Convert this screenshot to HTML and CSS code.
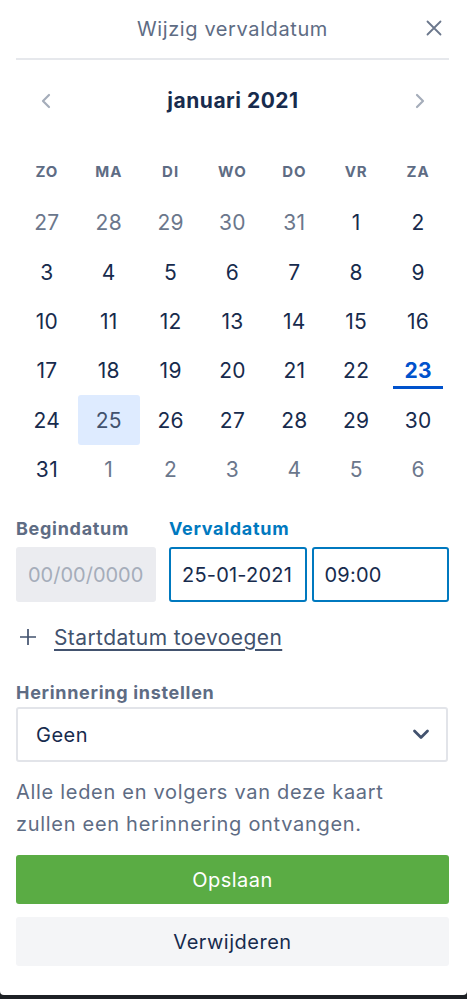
FILE: index.html
```html
<!DOCTYPE html>
<html lang="nl">
<head>
<meta charset="utf-8">
<link rel="stylesheet" href="styles.css">
</head>
<body>
<div class="popup">
  <header class="head">
    <span class="head-title">Wijzig vervaldatum</span>
    <span class="close">
      <svg width="16" height="16" viewBox="0 0 16 16"><path d="M1.5 1.5 L14.5 14.5 M14.5 1.5 L1.5 14.5" stroke="#6b778c" stroke-width="1.8" stroke-linecap="round" fill="none"/></svg>
    </span>
  </header>
  <div class="month">
    <span class="nav"><svg width="12" height="16" viewBox="0 0 12 16"><path d="M9 2 L3 8 L9 14" stroke="#a5adba" stroke-width="2.2" fill="none" stroke-linecap="round" stroke-linejoin="round"/></svg></span>
    <span class="month-title">januari 2021</span>
    <span class="nav"><svg width="12" height="16" viewBox="0 0 12 16"><path d="M3 2 L9 8 L3 14" stroke="#a5adba" stroke-width="2.2" fill="none" stroke-linecap="round" stroke-linejoin="round"/></svg></span>
  </div>
  <div class="grid">
    <div class="wd">ZO</div><div class="wd">MA</div><div class="wd">DI</div><div class="wd">WO</div><div class="wd">DO</div><div class="wd">VR</div><div class="wd">ZA</div>
    <div class="d out">27</div><div class="d out">28</div><div class="d out">29</div><div class="d out">30</div><div class="d out">31</div><div class="d">1</div><div class="d">2</div>
    <div class="d">3</div><div class="d">4</div><div class="d">5</div><div class="d">6</div><div class="d">7</div><div class="d">8</div><div class="d">9</div>
    <div class="d">10</div><div class="d">11</div><div class="d">12</div><div class="d">13</div><div class="d">14</div><div class="d">15</div><div class="d">16</div>
    <div class="d">17</div><div class="d">18</div><div class="d">19</div><div class="d">20</div><div class="d">21</div><div class="d">22</div><div class="d today">23</div>
    <div class="d">24</div><div class="d sel">25</div><div class="d">26</div><div class="d">27</div><div class="d">28</div><div class="d">29</div><div class="d">30</div>
    <div class="d">31</div><div class="d out">1</div><div class="d out">2</div><div class="d out">3</div><div class="d out">4</div><div class="d out">5</div><div class="d out">6</div>
  </div>
  <div class="dates">
    <div class="field start">
      <div class="label">Begindatum</div>
      <div class="input disabled">00/00/0000</div>
    </div>
    <div class="field due">
      <div class="label blue">Vervaldatum</div>
      <div class="pair">
        <div class="input active">25-01-2021</div>
        <div class="input active">09:00</div>
      </div>
    </div>
  </div>
  <div class="add">
    <svg width="18" height="18" viewBox="0 0 18 18"><path d="M9 1 V17 M1 9 H17" stroke="#42526e" stroke-width="1.7" fill="none"/></svg>
    <span class="add-text">Startdatum toevoegen</span>
  </div>
  <div class="label reminder-label">Herinnering instellen</div>
  <div class="select">
    <span>Geen</span>
    <svg width="18" height="11" viewBox="0 0 18 11"><path d="M2.5 2 L9 8.5 L15.5 2" stroke="#42526e" stroke-width="2.8" fill="none" stroke-linecap="round" stroke-linejoin="round"/></svg>
  </div>
  <p class="note">Alle leden en volgers van deze kaart<br>zullen een herinnering ontvangen.</p>
  <button class="btn save">Opslaan</button>
  <button class="btn remove">Verwijderen</button>
</div>
</body>
</html>
```

FILE: styles.css
```css
* { box-sizing: border-box; }
html, body { margin: 0; padding: 0; }
body {
  background: #1d2125;
  font-family: Inter, "Noto Sans", sans-serif;
  color: #172b4d;
  width: 467px;
  height: 999px;
  overflow: hidden;
}
.popup {
  background: #fff;
  height: 995px;
  border-radius: 0 0 4px 4px;
  padding: 0 18px 0 16px;
  display: flex;
  flex-direction: column;
}
.head {
  height: 60px;
  border-bottom: 2px solid #e6e8ec;
  display: flex;
  align-items: center;
  justify-content: center;
  position: relative;
}
.head-title {
  font-size: 20px;
  letter-spacing: 0.6px;
  color: #5e6c84;
}
.close {
  position: absolute;
  right: 7px;
  top: 20px;
  display: flex;
}
.month {
  height: 81px;
  display: flex;
  align-items: center;
  justify-content: space-between;
  padding: 0 23px 0 24px;
}
.month-title {
  font-size: 21px;
  letter-spacing: 0.5px;
  font-weight: 700;
  color: #172b4d;
}
.nav { display: flex; }
.grid {
  display: grid;
  grid-template-columns: repeat(7, 1fr);
  grid-auto-rows: 49.3px;
  margin-top: 8px;
}
.wd {
  font-size: 15px;
  font-weight: 700;
  color: #5e6c84;
  display: flex;
  align-items: center;
  justify-content: center;
  letter-spacing: 1px;
  padding-bottom: 4px;
}
.d {
  font-size: 21px;
  letter-spacing: 0.3px;
  display: flex;
  align-items: center;
  justify-content: center;
  color: #172b4d;
  border-radius: 3px;
  position: relative;
}
.d.out { color: #6b778c; }
.d.sel { background: #deebff; color: #42526e; }
.d.today { color: #0052cc; font-weight: 700; }
.d.today::after {
  content: "";
  position: absolute;
  left: 6px;
  right: 6px;
  bottom: 6px;
  height: 3px;
  background: #0052cc;
}
.dates {
  display: flex;
  gap: 13px;
  margin-top: 24px;
}
.label {
  font-size: 18px;
  letter-spacing: 0.7px;
  font-weight: 700;
  color: #5e6c84;
  line-height: 22px;
}
.label.blue { color: #0079bf; }
.field .label { margin-bottom: 7px; }
.start { width: 140px; flex: none; }
.due { flex: 1; min-width: 0; }
.pair { display: flex; gap: 5px; }
.input {
  height: 55px;
  border-radius: 3px;
  font-size: 20px;
  display: flex;
  align-items: center;
  padding: 0 12px;
  white-space: nowrap;
  overflow: hidden;
}
.input.disabled {
  background: #ebecf0;
  color: #a5adba;
}
.input.active {
  border: 2px solid #0079bf;
  color: #172b4d;
  letter-spacing: 0.2px;
  padding: 0 0 0 11px;
  flex: 1 1 0;
  min-width: 0;
}
.add {
  display: flex;
  align-items: center;
  gap: 17px;
  margin-top: 22px;
  padding-left: 3px;
  height: 26px;
}
.add-text {
  font-size: 21px;
  letter-spacing: 0.4px;
  color: #42526e;
  text-decoration: underline;
  text-decoration-thickness: 1.5px;
  text-underline-offset: 4px;
}
.reminder-label { margin-top: 32px; margin-bottom: 3px; }
.select {
  height: 55px;
  border: 2px solid #e2e4e9;
  border-radius: 3px;
  display: flex;
  align-items: center;
  justify-content: space-between;
  padding: 0 16px 0 18px;
  font-size: 20px;
  letter-spacing: 0.5px;
  color: #172b4d;
  margin-right: 1px;
}
.note {
  margin: 14px 0 0;
  font-size: 20px;
  letter-spacing: 0.7px;
  line-height: 32px;
  color: #5e6c84;
}
.btn {
  font-family: inherit;
  font-size: 20px;
  letter-spacing: 0.5px;
  height: 49px;
  border: none;
  border-radius: 3px;
  width: 100%;
}
.save {
  background: #5aac44;
  color: #fff;
  margin-top: 15px;
}
.remove {
  background: #f4f5f7;
  color: #172b4d;
  margin-top: 13px;
}
```
